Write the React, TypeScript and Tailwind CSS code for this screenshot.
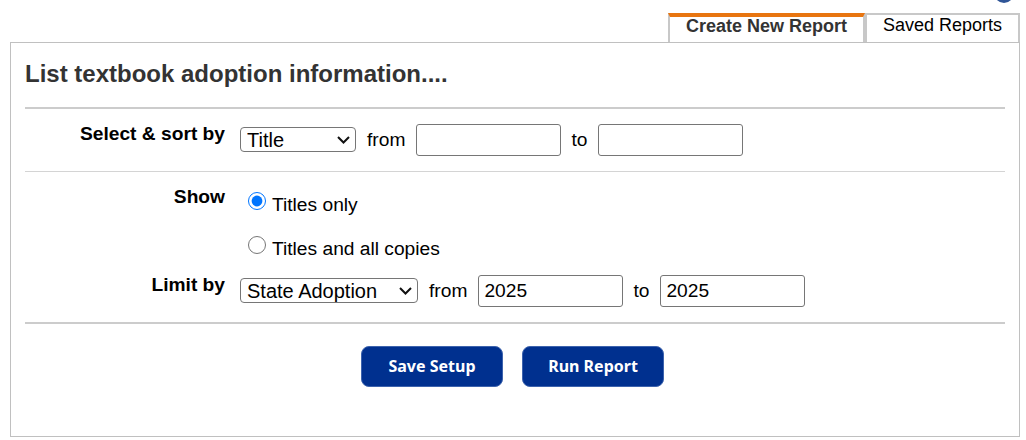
import React from "react";

const text = "font-['Liberation_Sans',Arial,sans-serif]";
const ctl = "h-[32px] w-[145px] rounded-[3px] border border-[#767676] bg-white px-[5px] text-[19.2px] text-black font-['Liberation_Sans',Arial,sans-serif]";
const sel = "h-[25px] w-full appearance-none rounded-[4px] border border-[#767676] bg-white pl-[6px] pt-[1px] text-[20px] leading-[23px] text-black font-['Liberation_Sans',Arial,sans-serif]";
const btn = "w-[142px] h-[41px] pb-[2px] rounded-[8px] bg-[#00308f] border border-[#3d63ad] text-white text-[16px] font-bold font-['Noto_Sans',sans-serif]";
const lbl = "text-[19.2px] leading-[24px]";

function Select({ value, width }: { value: string; width: string }) {
  return (
    <div className={`relative mt-[3px] h-[25px] ${width}`}>
      <select className={sel} defaultValue={value}>
        <option>{value}</option>
      </select>
      <svg width="13" height="8" viewBox="0 0 13 8" className="absolute right-[6px] top-[9px] pointer-events-none">
        <path d="M1 1 L6.5 6.5 L12 1" fill="none" stroke="#111" strokeWidth="2" />
      </svg>
    </div>
  );
}

export default function App() {
  return (
    <div className={`relative w-[1026px] h-[440px] bg-white overflow-hidden text-black ${text}`}>
      <div className="absolute right-[12px] top-[-17px] w-[20px] h-[20px] rounded-full bg-[#2f5597]" />
      <div className="pt-[13px] pl-[10px] pr-[6px]">
        <div className="flex justify-end h-[29px]">
          <div className="w-[197px] h-[29px] border-x-2 border-[#c8c8c8] border-t-[4px] border-t-[#e87510] bg-white text-center text-[18px] leading-[18px] font-bold text-[#333]">
            Create New Report
          </div>
          <div className="w-[155px] h-[29px] border-x-2 border-t-2 border-[#c8c8c8] bg-white text-center text-[18px] leading-[21px] text-black">
            Saved Reports
          </div>
        </div>
        <div className="h-[395px] border border-[#c0c0c0] px-[14px]">
          <h1 className="h-[64px] pt-[14px] text-[24px] leading-[34px] font-bold text-[#333]">
            List textbook adoption information....
          </h1>
          <div className="h-[2px] bg-[#cccccc]" />
          <div className="h-[62px] flex">
            <div className={`w-[200px] pt-[13px] text-right font-bold ${lbl}`}>Select &amp; sort by</div>
            <div className="ml-[15px] pt-[15px] flex items-start">
              <Select value="Title" width="w-[116px]" />
              <span className={`ml-[11px] mt-[4px] ${lbl}`}>from</span>
              <input className={`${ctl} ml-[11px]`} />
              <span className={`ml-[10px] mt-[4px] ${lbl}`}>to</span>
              <input className={`${ctl} ml-[11px]`} />
            </div>
          </div>
          <div className="h-px bg-[#d4d4d4]" />
          <div className="h-[88px] flex">
            <div className={`w-[200px] pt-[13px] text-right font-bold ${lbl}`}>Show</div>
            <div className="ml-[23px] pt-[21px] flex flex-col gap-[20px]">
              <label className="flex items-center h-[24px] gap-[6px]">
                <input type="radio" name="show" defaultChecked className="w-[18px] h-[18px] m-0 -mt-[9px]" />
                <span className={lbl}>Titles only</span>
              </label>
              <label className="flex items-center h-[24px] gap-[6px]">
                <input type="radio" name="show" className="w-[18px] h-[18px] m-0 -mt-[9px]" />
                <span className={lbl}>Titles and all copies</span>
              </label>
            </div>
          </div>
          <div className="h-[62px] flex">
            <div className={`w-[200px] text-right font-bold pt-[13px] ${lbl}`}>Limit by</div>
            <div className="ml-[15px] pt-[15px] flex items-start">
              <Select value="State Adoption" width="w-[178px]" />
              <span className={`ml-[11px] mt-[4px] ${lbl}`}>from</span>
              <input className={`${ctl} ml-[11px]`} defaultValue="2025" />
              <span className={`ml-[10px] mt-[4px] ${lbl}`}>to</span>
              <input className={`${ctl} ml-[11px]`} defaultValue="2025" />
            </div>
          </div>
          <div className="h-[2px] bg-[#cccccc]" />
          <div className="mt-[22px] flex justify-center gap-[19px] pr-[5px]">
            <button className={btn}>Save Setup</button>
            <button className={btn}>Run Report</button>
          </div>
        </div>
      </div>
    </div>
  );
}
